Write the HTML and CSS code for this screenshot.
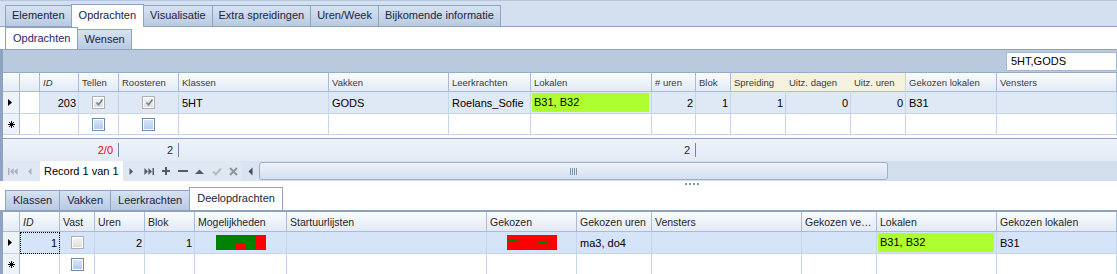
FILE: index.html
```html
<!DOCTYPE html>
<html lang="nl">
<head>
    <meta charset="UTF-8">
    <title>Opdrachten</title>
    <link rel="stylesheet" href="styles.css">
</head>
<body>
    <div class="tabs main-tabs">
        <div class="tab">Elementen</div>
        <div class="tab active">Opdrachten</div>
        <div class="tab">Visualisatie</div>
        <div class="tab">Extra spreidingen</div>
        <div class="tab">Uren/Week</div>
        <div class="tab">Bijkomende informatie</div>
    </div>
    <div class="tabs sub-tabs">
        <div class="tab active">Opdrachten</div>
        <div class="tab">Wensen</div>
    </div>

    <div class="panel">
        <div class="find-bar">
            <input class="find" type="text" value="5HT,GODS">
        </div>
        <div class="grid-area">
            <table class="grid top-grid">
                <colgroup>
                    <col class="w17"><col class="w20"><col class="w39"><col class="w40"><col class="w60">
                    <col class="w150"><col class="w120"><col class="w82"><col class="w121"><col class="w44">
                    <col class="w35"><col class="w55"><col class="w65"><col class="w55"><col class="w91"><col class="w120">
                </colgroup>
                <tr>
                    <th></th>
                    <th></th>
                    <th class="key">ID</th>
                    <th>Tellen</th>
                    <th>Roosteren</th>
                    <th>Klassen</th>
                    <th>Vakken</th>
                    <th>Leerkrachten</th>
                    <th>Lokalen</th>
                    <th># uren</th>
                    <th>Blok</th>
                    <th class="band">Spreiding</th>
                    <th class="band">Uitz. dagen</th>
                    <th class="band last">Uitz. uren</th>
                    <th>Gekozen lokalen</th>
                    <th>Vensters</th>
                </tr>
                <tr class="current">
                    <td class="ind"><svg width="4" height="7" viewBox="0 0 4 7"><path class="arrow" d="M0 0L4 3.5 0 7z"/></svg></td>
                    <td class="blank"></td>
                    <td class="num">203</td>
                    <td class="center"><span class="check disabled"><svg width="9" height="9" viewBox="0 0 9 9"><path d="M1.5 4.5l2 2.2 4-5.2" /></svg></span></td>
                    <td class="center"><span class="check disabled"><svg width="9" height="9" viewBox="0 0 9 9"><path d="M1.5 4.5l2 2.2 4-5.2" /></svg></span></td>
                    <td>5HT</td>
                    <td>GODS</td>
                    <td>Roelans_Sofie</td>
                    <td class="fill"><div class="green">B31, B32</div></td>
                    <td class="num">2</td>
                    <td class="num">1</td>
                    <td class="num">1</td>
                    <td class="num">0</td>
                    <td class="num">0</td>
                    <td>B31</td>
                    <td></td>
                </tr>
                <tr class="new-row">
                    <td class="ind"><svg width="7" height="7" viewBox="0 0 7 7"><path d="M3.5 0v7M0 3.5h7M1 1l5 5M6 1L1 6"/></svg></td>
                    <td class="blank"></td>
                    <td></td>
                    <td class="center"><span class="check"></span></td>
                    <td class="center"><span class="check"></span></td>
                    <td></td><td></td><td></td><td></td><td></td>
                    <td></td><td></td><td></td><td></td><td></td><td></td>
                </tr>
            </table>
        </div>
        <div class="summary">
            <div></div>
            <div class="total"><span class="error">2/0</span></div>
            <div class="total"><span>2</span></div>
            <div></div>
            <div class="total"><span>2</span></div>
        </div>
        <div class="navigator">
            <span class="nav-btn off"><svg width="10" height="9" viewBox="0 0 10 9"><path d="M0 1h1.5v7H0zM5.6 1L2 4.5 5.6 8zM9.6 1L6 4.5 9.6 8z"/></svg></span>
            <span class="nav-btn off"><svg width="5" height="9" viewBox="0 0 5 9"><path d="M4.5 1L1 4.5 4.5 8z"/></svg></span>
            <span class="record">Record 1 van 1</span>
            <span class="nav-btn"><svg width="5" height="9" viewBox="0 0 5 9"><path d="M.5 1L4 4.5.5 8z"/></svg></span>
            <span class="nav-btn"><svg width="10" height="9" viewBox="0 0 10 9"><path d="M.4 1L4 4.5.4 8zM4.4 1L8 4.5 4.4 8zM8.5 1H10v7H8.5z"/></svg></span>
            <span class="nav-btn"><svg width="8" height="8" viewBox="0 0 8 8"><path d="M3 0h2v8H3zM0 3h8v2H0z"/></svg></span>
            <span class="nav-btn"><svg width="10" height="8" viewBox="0 0 10 8"><path d="M0 3h10v2H0z"/></svg></span>
            <span class="nav-btn"><svg width="9" height="5" viewBox="0 0 9 5"><path d="M0 5L4.5 .5 9 5z"/></svg></span>
            <span class="nav-btn off"><svg class="stroke" width="10" height="9" viewBox="0 0 10 9"><path d="M1 4.5l2.8 2.8L9 1.5"/></svg></span>
            <span class="nav-btn dim"><svg class="stroke" width="9" height="9" viewBox="0 0 9 9"><path d="M1 1l7 7M8 1L1 8"/></svg></span>
            <div class="hscroll">
                <span class="scroll-arrow"><svg width="5" height="9" viewBox="0 0 5 9"><path d="M4.5 .5L.5 4.5 4.5 8.5z"/></svg></span>
                <span class="thumb"><span class="grip"></span></span>
            </div>
        </div>
    </div>

    <div class="splitter"><span class="dots"></span></div>

    <div class="tabs detail-tabs">
        <div class="tab">Klassen</div>
        <div class="tab">Vakken</div>
        <div class="tab">Leerkrachten</div>
        <div class="tab active">Deelopdrachten</div>
    </div>
    <div class="detail">
        <table class="grid bottom-grid">
            <colgroup>
                <col class="w17"><col class="w40"><col class="w35"><col class="w50"><col class="w50">
                <col class="w92"><col class="w200"><col class="w90"><col class="w75"><col class="w150">
                <col class="w75"><col class="w120"><col class="w120">
            </colgroup>
            <tr>
                <th></th>
                <th class="key">ID</th>
                <th>Vast</th>
                <th>Uren</th>
                <th>Blok</th>
                <th>Mogelijkheden</th>
                <th>Startuurlijsten</th>
                <th>Gekozen</th>
                <th>Gekozen uren</th>
                <th>Vensters</th>
                <th title="Gekozen vensters">Gekozen ve…</th>
                <th>Lokalen</th>
                <th>Gekozen lokalen</th>
            </tr>
            <tr class="selected">
                <td class="ind"><svg width="4" height="7" viewBox="0 0 4 7"><path class="arrow" d="M0 0L4 3.5 0 7z"/></svg></td>
                <td class="num focus">1</td>
                <td class="center"><span class="check disabled"></span></td>
                <td class="num">2</td>
                <td class="num">1</td>
                <td class="center">
                    <svg class="week" width="50" height="15" viewBox="0 0 50 15">
                        <rect width="50" height="15" fill="#008000"/>
                        <rect x="40" width="10" height="15" fill="#ff0000"/>
                        <rect x="20" y="8" width="10" height="7" fill="#ff0000"/>
                    </svg>
                </td>
                <td></td>
                <td class="center">
                    <svg class="week" width="50" height="15" viewBox="0 0 50 15">
                        <rect width="50" height="15" fill="#ff0000"/>
                        <rect y="4.5" width="10" height="2" fill="#008000"/>
                        <rect x="30" y="7" width="10" height="2" fill="#008000"/>
                    </svg>
                </td>
                <td>ma3, do4</td>
                <td></td>
                <td></td>
                <td class="fill"><div class="green">B31, B32</div></td>
                <td>B31</td>
            </tr>
            <tr class="new-row">
                <td class="ind"><svg width="7" height="7" viewBox="0 0 7 7"><path d="M3.5 0v7M0 3.5h7M1 1l5 5M6 1L1 6"/></svg></td>
                <td></td>
                <td class="center"><span class="check"></span></td>
                <td></td><td></td><td></td><td></td><td></td>
                <td></td><td></td><td></td><td></td><td></td>
            </tr>
        </table>
    </div>
</body>
</html>
```

FILE: styles.css
```css
* {
    box-sizing: border-box;
}
body {
    margin: 0;
    width: 1117px;
    height: 274px;
    overflow: hidden;
    background-color: #fff;
    color: #000;
    font-family: "Liberation Sans", Arial, sans-serif;
    font-size: 11px;
}

/* tabs */
.tabs {
    display: flex;
    align-items: flex-end;
    padding-left: 5px;
}
.tab {
    height: 21px;
    line-height: 19px;
    padding: 0 6px;
    margin-right: -1px;
    border: 1px solid #8ea3c1;
    border-bottom: none;
    background: linear-gradient(#d6e2f1, #b8cae1);
    color: #1c2340;
    white-space: nowrap;
}
.tab.active {
    position: relative;
    z-index: 1;
    padding: 0 7px;
    background: #fff;
}
.main-tabs {
    height: 27px;
    background-color: #d4e0ef;
    border-top: 1px solid #b5c5db;
    border-bottom: 1px solid #8ea3c1;
}
.main-tabs .active {
    height: 23px;
    line-height: 21px;
    margin-bottom: -1px;
}
.sub-tabs {
    height: 22px;
}
.sub-tabs .tab {
    height: 20px;
    line-height: 18px;
}
.sub-tabs .active {
    height: 22px;
    line-height: 20px;
    color: #2a2470;
}
.detail-tabs {
    height: 23px;
}
.detail-tabs .tab {
    height: 20px;
    line-height: 18px;
    padding: 0 7px;
}
.detail-tabs .active {
    height: 23px;
    line-height: 21px;
}

/* main panel */
.panel {
    border-left: 3px solid #8ea3c1;
    border-top: 1px solid #8ea3c1;
}
.find-bar {
    height: 22px;
    background-color: #b9cadf;
    display: flex;
    justify-content: flex-end;
    align-items: center;
}
.find {
    width: 111px;
    height: 19px;
    margin: 0;
    padding: 0 4px;
    border: 1px solid #a3b7d3;
    font-family: "Liberation Sans", Arial, sans-serif;
    font-size: 11px;
    color: #000;
}
.grid-area {
    height: 66px;
    border-top: 1px solid #98acc9;
    background-color: #fff;
}

/* grids */
.grid {
    border-collapse: separate;
    border-spacing: 0;
    table-layout: fixed;
    width: 1114px;
}
.w17 { width: 17px; }
.w20 { width: 20px; }
.w35 { width: 35px; }
.w39 { width: 39px; }
.w40 { width: 40px; }
.w44 { width: 44px; }
.w50 { width: 50px; }
.w55 { width: 55px; }
.w60 { width: 60px; }
.w65 { width: 65px; }
.w75 { width: 75px; }
.w82 { width: 82px; }
.w90 { width: 90px; }
.w91 { width: 91px; }
.w92 { width: 92px; }
.w120 { width: 120px; }
.w121 { width: 121px; }
.w150 { width: 150px; }
.w200 { width: 200px; }

.grid th,
.grid td {
    padding: 0 3px;
    border-right: 1px solid #c5d6ec;
    border-bottom: 1px solid #c5d6ec;
    white-space: nowrap;
    overflow: hidden;
    text-align: left;
    vertical-align: middle;
}
.grid th {
    font-weight: normal;
    color: #3a3a3a;
    background: linear-gradient(#fafcfe, #e2eaf6);
    border-right-color: #a8bcd7;
    border-bottom-color: #a8bcd7;
}
.grid th.key {
    font-style: italic;
}
.grid th.band {
    background: #f4f2dd;
    border-right-color: #f4f2dd;
}
.grid th.band.last {
    border-right-color: #d9d6bf;
}
.top-grid th {
    height: 19px;
    font-size: 9.5px;
}
.top-grid td {
    height: 21px;
}
.bottom-grid th {
    height: 20px;
    font-size: 10.5px;
    color: #262626;
}
.bottom-grid td {
    height: 22px;
}
.grid .num {
    text-align: right;
    padding-right: 2px;
}
.grid .center {
    text-align: center;
    padding: 0;
}
.grid .ind {
    padding: 0 0 0 5px;
    background-color: #eef3fa;
    border-right-color: #a8bcd7;
    line-height: 0;
}
.grid .ind svg {
    fill: #000;
    stroke: #000;
    stroke-width: 1;
}
.grid .ind .arrow {
    stroke: none;
}
.grid .blank {
    background-color: #fff;
}
.current td {
    background-color: #dfe8f5;
}
.selected td {
    background-color: #d5e4f8;
}
.selected .focus {
    outline: 1px dotted #000;
    outline-offset: -1px;
}
.grid .fill {
    padding: 1px 2px 1px 1px;
}
.green {
    height: 100%;
    padding: 0 2px;
    line-height: 19px;
    background-color: #adff2f;
}
.week {
    display: block;
    margin: 0 auto;
}

/* checkboxes */
.check {
    display: inline-block;
    width: 13px;
    height: 13px;
    vertical-align: middle;
    border: 1px solid #6f89ae;
    background: linear-gradient(#dce7f5, #b3c8e5);
    box-shadow: inset 0 0 0 1px #fff;
    line-height: 0;
}
.check.disabled {
    border-color: #b0b0b0;
    background: linear-gradient(#f6f6f6, #dcdcdc);
}
.check svg {
    margin: 1px 0 0 1px;
    fill: none;
    stroke: #6f7f99;
    stroke-width: 1.6;
}

/* totals */
.summary {
    height: 23px;
    border-top: 1px solid #8ea3c1;
    background: linear-gradient(#eef3fa, #e3eaf5);
    display: grid;
    grid-template-columns: 76px 40px 60px 473px 44px;
    align-items: center;
    color: #1a2540;
}
.total {
    text-align: right;
}
.total span {
    display: inline-block;
    height: 14px;
    line-height: 14px;
    padding-right: 5px;
    border-right: 1px solid #6f87a9;
}
.error {
    color: #ff0000;
}

/* record navigator */
.navigator {
    height: 20px;
    display: flex;
    align-items: stretch;
    padding-left: 1px;
    background-color: #dfe7f3;
}
.nav-btn {
    width: 17px;
    display: flex;
    align-items: center;
    justify-content: center;
    fill: #4f5b6d;
}
.nav-btn.off {
    fill: #abb1ba;
}
.nav-btn.dim {
    fill: #8e949c;
}
.nav-btn .stroke {
    fill: none;
    stroke: currentColor;
    stroke-width: 2;
}
.nav-btn.off .stroke {
    color: #b4b8bf;
}
.nav-btn.dim .stroke {
    color: #8e949c;
}
.record {
    width: 83px;
    margin-left: 2px;
    padding-left: 4px;
    line-height: 20px;
    background-color: #fff;
    white-space: nowrap;
}
.hscroll {
    flex: 1;
    display: flex;
    align-items: center;
    background-color: #d3deed;
}
.scroll-arrow {
    width: 17px;
    height: 20px;
    display: flex;
    align-items: center;
    justify-content: center;
    fill: #3f4a5c;
    background-color: #dae4f1;
}
.thumb {
    width: 629px;
    height: 18px;
    border: 1px solid #9db1cd;
    border-radius: 3px;
    background: linear-gradient(#edf2f9, #d5e0ef);
    display: flex;
    align-items: center;
    justify-content: center;
}
.grip {
    width: 7px;
    height: 7px;
    background: repeating-linear-gradient(90deg, #7f93b0 0 1px, transparent 1px 2px);
}

/* splitter */
.splitter {
    height: 6px;
    padding: 2px 0 0 685px;
}
.dots {
    display: block;
    width: 14px;
    height: 2px;
    background: repeating-linear-gradient(90deg, #7d94b5 0 2px, transparent 2px 4px);
}

/* detail panel */
.detail {
    border-left: 3px solid #8ea3c1;
    border-top: 2px solid #8ea3c1;
}
```
